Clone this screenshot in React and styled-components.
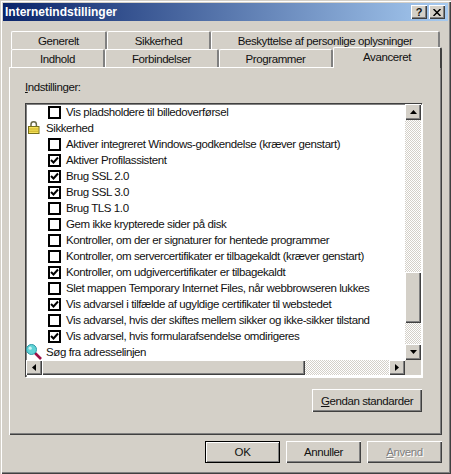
import React from "react";
import styled, { createGlobalStyle, css } from "styled-components";

const face = "#d4d0c8";
const dither = css`
  background: repeating-conic-gradient(#d4d0c8 0 25%, #ffffff 0 50%) 0 0 / 2px 2px;
`;
const raised = css`
  background: ${face};
  box-shadow: inset 1px 1px 0 #ffffff, inset -1px -1px 0 #404040,
    inset -2px -2px 0 #808080;
`;

const rows = [
  { text: "Vis pladsholdere til billedoverførsel", kind: "off" },
  { text: "Sikkerhed", kind: "lock" },
  { text: "Aktiver integreret Windows-godkendelse (kræver genstart)", kind: "off" },
  { text: "Aktiver Profilassistent", kind: "on" },
  { text: "Brug SSL 2.0", kind: "on" },
  { text: "Brug SSL 3.0", kind: "on" },
  { text: "Brug TLS 1.0", kind: "off" },
  { text: "Gem ikke krypterede sider på disk", kind: "off" },
  { text: "Kontroller, om der er signaturer for hentede programmer", kind: "off" },
  { text: "Kontroller, om servercertifikater er tilbagekaldt (kræver genstart)", kind: "off" },
  { text: "Kontroller, om udgivercertifikater er tilbagekaldt", kind: "on" },
  { text: "Slet mappen Temporary Internet Files, når webbrowseren lukkes", kind: "off" },
  { text: "Vis advarsel i tilfælde af ugyldige certifikater til webstedet", kind: "on" },
  { text: "Vis advarsel, hvis der skiftes mellem sikker og ikke-sikker tilstand", kind: "off" },
  { text: "Vis advarsel, hvis formularafsendelse omdirigeres", kind: "on" },
  { text: "Søg fra adresselinjen", kind: "search" },
];

const backTabs = [
  { label: "Generelt", width: 96 },
  { label: "Sikkerhed", width: 104 },
  { label: "Beskyttelse af personlige oplysninger", width: 229 },
];
const frontTabs = [
  { label: "Indhold", width: 94 },
  { label: "Forbindelser", width: 114 },
  { label: "Programmer", width: 114 },
];

const Arrow = ({ dir }) => {
  const points = {
    up: "0,4 7,4 3.5,0",
    down: "0,0 7,0 3.5,4",
    left: "4,0 4,7 0,3.5",
    right: "0,0 0,7 4,3.5",
  };
  const vertical = dir === "up" || dir === "down";
  return (
    <svg width={vertical ? 7 : 4} height={vertical ? 4 : 7}>
      <polygon points={points[dir]} fill="#000" />
    </svg>
  );
};

const Lock = () => (
  <svg width="16" height="16" viewBox="0 0 16 16">
    <path d="M5 7V4.5a2.7 2.7 0 0 1 5.4 0V7" fill="none" stroke="#6a6a4a" strokeWidth="1.5" />
    <rect x="2.5" y="6.5" width="10.5" height="7" fill="#f6e25a" stroke="#77701c" />
    <path d="M3 9h9.5M3 11.2h9.5" stroke="#c8ae26" />
  </svg>
);

const Magnifier = () => (
  <svg width="16" height="16" viewBox="0 0 16 16">
    <path d="M8 8l7 7" stroke="#9c0f45" strokeWidth="2.6" />
    <circle cx="5.5" cy="5.5" r="5" fill="#5fd3d6" stroke="#2f9aa8" />
    <circle cx="4.2" cy="4.2" r="1.6" fill="#c9f4f4" />
  </svg>
);

const Check = () => (
  <svg width="9" height="9" viewBox="0 0 9 9">
    <path d="M1 4l2.5 2.5L8 1.5" fill="none" stroke="#000" strokeWidth="2" />
  </svg>
);

const App = () => (
  <>
    <GlobalStyle />
    <Window>
      <TitleBar>
        <Title>Internetindstillinger</Title>
        <CaptionButton>?</CaptionButton>
        <CloseButton>
          <svg width="8" height="7" viewBox="0 0 8 7">
            <path d="M0.5 0l7 7M7.5 0l-7 7" stroke="#000" strokeWidth="1.5" />
          </svg>
        </CloseButton>
      </TitleBar>

      <Content>
        <TabRow $pad={2} $height={18}>
          {backTabs.map((t) => (
            <Tab key={t.label} $width={t.width}>
              {t.label}
            </Tab>
          ))}
        </TabRow>
        <TabRow $pad={2} $height={18}>
          {frontTabs.map((t) => (
            <Tab key={t.label} $width={t.width}>
              {t.label}
            </Tab>
          ))}
          <ActiveTab>Avanceret</ActiveTab>
        </TabRow>

        <Panel>
          <PanelLabel>
            <u>I</u>ndstillinger:
          </PanelLabel>
          <ListBox>
            <Rows>
              {rows.map((r) => (
                <Row key={r.text} $group={r.kind === "lock" || r.kind === "search"}>
                  {r.kind === "lock" && <RowIcon><Lock /></RowIcon>}
                  {r.kind === "search" && <RowIcon><Magnifier /></RowIcon>}
                  {(r.kind === "on" || r.kind === "off") && (
                    <CheckBox>{r.kind === "on" && <Check />}</CheckBox>
                  )}
                  {r.text}
                </Row>
              ))}
            </Rows>
            <VScroll>
              <ScrollButton $h={16}><Arrow dir="up" /></ScrollButton>
              <VTrack>
                <VThumb />
              </VTrack>
              <ScrollButton $h={16}><Arrow dir="down" /></ScrollButton>
            </VScroll>
            <HScroll>
              <ScrollButton $w={16}><Arrow dir="left" /></ScrollButton>
              <HThumb />
              <HTrack />
              <ScrollButton $w={16}><Arrow dir="right" /></ScrollButton>
            </HScroll>
            <Corner />
          </ListBox>
          <PanelActions>
            <PushButton $width={110} $height={23}>
              <u>G</u>endan standarder
            </PushButton>
          </PanelActions>
        </Panel>

        <Footer>
          <DefaultButton>OK</DefaultButton>
          <PushButton $width={75} $height={22}>Annuller</PushButton>
          <DisabledButton $width={75} $height={22}>
            <u>A</u>nvend
          </DisabledButton>
        </Footer>
      </Content>
    </Window>
  </>
);

const GlobalStyle = createGlobalStyle`
  body {
    margin: 0;
    background: #d4d0c8;
    font-family: "Liberation Sans", Arial, sans-serif;
    font-size: 11.5px;
    letter-spacing: -0.41px;
    color: #111;
  }
`;

const Window = styled.div`
  box-sizing: border-box;
  width: 451px;
  height: 474px;
  padding: 3px;
  background: ${face};
  box-shadow: inset 1px 1px 0 #d4d0c8, inset 2px 2px 0 #ffffff,
    inset -1px -1px 0 #404040, inset -2px -2px 0 #808080;
`;

const TitleBar = styled.div`
  display: flex;
  align-items: center;
  height: 18px;
  padding: 0 3px 0 2px;
  background: linear-gradient(90deg, #0a246a, #a6caf0);
`;

const Title = styled.div`
  flex: 1;
  color: #fff;
  font-weight: bold;
  font-size: 12px;
  letter-spacing: 0;
`;

const CaptionButton = styled.div`
  ${raised}
  display: flex;
  align-items: center;
  justify-content: center;
  width: 16px;
  height: 14px;
  font-weight: bold;
  font-size: 11px;
`;

const CloseButton = styled(CaptionButton)`
  margin-left: 2px;
`;

const Content = styled.div`
  padding: 10px 6px 0 6px;
`;

const TabRow = styled.div`
  display: flex;
  align-items: flex-end;
  height: ${(p) => p.$height}px;
  padding-left: ${(p) => p.$pad}px;
`;

const Tab = styled.div`
  box-sizing: border-box;
  display: flex;
  align-items: center;
  justify-content: center;
  width: ${(p) => p.$width}px;
  height: 100%;
  background: ${face};
  border-top: 1px solid #fff;
  border-left: 1px solid #fff;
  border-right: 2px solid #808080;
  border-top-left-radius: 2px;
  border-top-right-radius: 2px;
`;

const ActiveTab = styled.div`
  position: relative;
  z-index: 1;
  box-sizing: border-box;
  width: 109px;
  height: 21px;
  margin-bottom: -1px;
  padding: 3px 0 0;
  text-align: center;
  background: ${face};
  border-top: 1px solid #fff;
  border-left: 1px solid #fff;
  border-right: 2px solid #404040;
  border-top-left-radius: 2px;
  border-top-right-radius: 2px;
`;

const Panel = styled.div`
  box-sizing: border-box;
  width: 433px;
  height: 368px;
  padding: 13px 0 0 16px;
  box-shadow: inset 1px 1px 0 #fff, inset -1px -1px 0 #404040,
    inset -2px -2px 0 #808080;
`;

const PanelLabel = styled.div`
  height: 23px;
  line-height: 14px;
`;

const ListBox = styled.div`
  box-sizing: border-box;
  display: grid;
  grid-template-columns: 379px 16px;
  grid-template-rows: 256px 15px;
  width: 397px;
  height: 274px;
  padding: 1px 1px 1px 1px;
  background: #fff;
  box-shadow: inset 1px 1px 0 #404040, inset 2px 2px 0 #808080, 1px 1px 0 #fff;
`;

const Rows = styled.div`
  overflow: hidden;
`;

const Row = styled.div`
  display: flex;
  align-items: center;
  height: 16px;
  padding-left: ${(p) => (p.$group ? 0 : 22)}px;
  white-space: nowrap;
  line-height: 16px;
`;

const RowIcon = styled.span`
  display: flex;
  width: 20px;
  flex: none;
`;

const CheckBox = styled.span`
  box-sizing: border-box;
  display: flex;
  align-items: center;
  justify-content: center;
  flex: none;
  width: 13px;
  height: 13px;
  margin-right: 5px;
  border: 2px solid #000;
  background: #fff;
`;

const VScroll = styled.div`
  display: flex;
  flex-direction: column;
`;

const ScrollButton = styled.div`
  ${raised}
  display: flex;
  align-items: center;
  justify-content: center;
  flex: none;
  width: ${(p) => (p.$w ? `${p.$w}px` : "100%")};
  height: ${(p) => (p.$h ? `${p.$h}px` : "100%")};
`;

const VTrack = styled.div`
  ${dither}
  flex: 1;
  padding-top: 152px;
`;

const VThumb = styled.div`
  ${raised}
  height: 51px;
`;

const HScroll = styled.div`
  display: flex;
`;

const HThumb = styled.div`
  ${raised}
  width: 263px;
`;

const HTrack = styled.div`
  ${dither}
  flex: 1;
`;

const Corner = styled.div`
  background: ${face};
`;

const PanelActions = styled.div`
  display: flex;
  justify-content: flex-end;
  width: 397px;
  margin-top: 12px;
`;

const PushButton = styled.div`
  ${raised}
  display: flex;
  align-items: center;
  justify-content: center;
  width: ${(p) => p.$width}px;
  height: ${(p) => p.$height}px;
`;

const DisabledButton = styled(PushButton)`
  color: #808080;
  text-shadow: 1px 1px 0 #fff;
`;

const DefaultButton = styled.div`
  box-sizing: border-box;
  display: flex;
  align-items: center;
  justify-content: center;
  width: 75px;
  height: 22px;
  background: ${face};
  border: 1px solid #000;
  box-shadow: inset 1px 1px 0 #fff, inset -1px -1px 0 #808080;
`;

const Footer = styled.div`
  display: flex;
  justify-content: flex-end;
  gap: 6px;
  width: 433px;
  margin-top: 6px;
`;

export default App;
